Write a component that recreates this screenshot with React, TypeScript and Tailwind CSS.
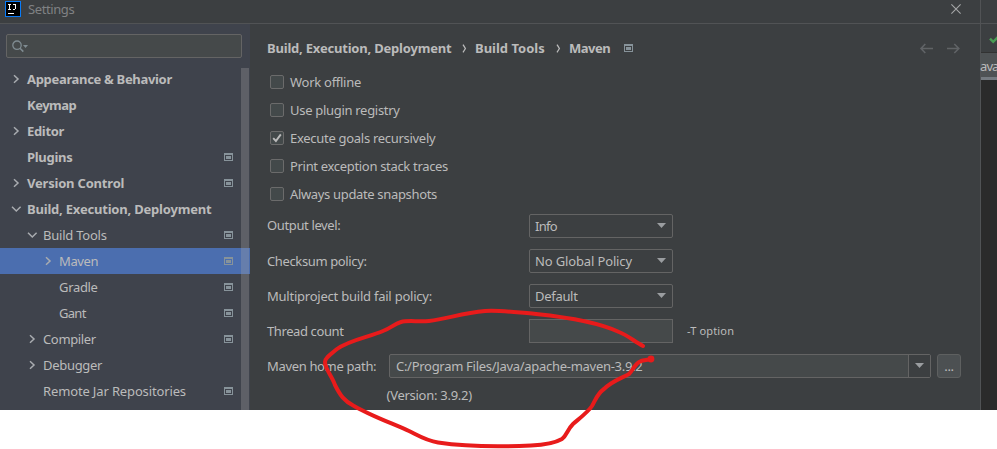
import type { ReactNode } from "react";

type Arrow = "right" | "down" | null;

function Chevron({ dir }: { dir: Arrow }) {
  if (!dir) return null;
  return (
    <svg className="block" width="12" height="12" viewBox="0 0 12 12" fill="none" stroke="#a9acb0" strokeWidth="1.5">
      {dir === "right" ? <path d="M4 2.3 L8 6 L4 9.7" /> : <path d="M2 3.8 L6.3 8 L10.6 3.8" />}
    </svg>
  );
}

function ProjectIcon() {
  return (
    <svg className="block shrink-0" width="9" height="8" viewBox="0 0 9 8" shapeRendering="crispEdges">
      <path fill="#87939a" fillRule="evenodd" d="M0 0h9v8H0z M1 2v5h7V2z" />
      <path fill="#87939a" d="M2 3h5v3H2z" />
    </svg>
  );
}

function Row({
  label,
  pad,
  arrow = null,
  bold,
  icon,
  selected,
  track = "",
}: {
  label: string;
  pad: string;
  arrow?: Arrow;
  bold?: boolean;
  icon?: boolean;
  selected?: boolean;
  track?: string;
}) {
  return (
    <div className={`flex h-[26px] items-center pr-[17px] ${pad} ${selected ? "bg-[#4b6eaf]" : ""}`}>
      <span className="mr-[5px] size-3 shrink-0">
        <Chevron dir={arrow} />
      </span>
      <span className={`flex-1 ${bold ? "font-bold" : ""} ${track}`}>{label}</span>
      {icon && <ProjectIcon />}
    </div>
  );
}

function Check({ label, checked, track = "" }: { label: string; checked?: boolean; track?: string }) {
  return (
    <div className="flex h-7 items-center">
      <span className="mr-[6px] flex size-[14px] items-center justify-center rounded-[2px] border border-[#6b6b6b] bg-[#43494a]">
        {checked && (
          <svg width="10" height="10" viewBox="0 0 10 10" fill="none" stroke="#bbbbbb" strokeWidth="1.9">
            <path d="M1.2 5.2 L3.9 8 L8.8 1.4" />
          </svg>
        )}
      </span>
      <span className={track}>{label}</span>
    </div>
  );
}

function Triangle() {
  return (
    <svg width="9" height="5" viewBox="0 0 9 5">
      <path d="M0 0h9L4.5 5z" fill="#9a9da0" />
    </svg>
  );
}

function Field({ label, children, track = "" }: { label: string; children: ReactNode; track?: string }) {
  return (
    <div className="flex h-[35px] items-center">
      <span className={`w-[262px] ${track}`}>{label}</span>
      {children}
    </div>
  );
}

function Select({ value, track = "" }: { value: string; track?: string }) {
  return (
    <div className="flex h-6 w-[144px] items-center justify-between rounded-[2px] border border-[#646464] pl-[5px] pr-[6px]">
      <span className={track}>{value}</span>
      <Triangle />
    </div>
  );
}

function Separator() {
  return (
    <svg width="5" height="9" viewBox="0 0 5 9" fill="none" stroke="#bbbbbb" strokeWidth="1.3">
      <path d="M1 .7 Q2.5 3 3.4 4.5 Q2.5 6 1 8.3" />
    </svg>
  );
}

export default function App() {
  return (
    <div className="relative h-[449px] w-[997px] overflow-hidden whitespace-nowrap bg-white font-['Noto_Sans','Open_Sans',sans-serif] text-[13px] leading-[18px] text-[#bbbbbb]">
      <div className="flex h-[410px]">
        <div className="flex w-[980px] flex-col bg-[#3c3f41]">
          <header className="flex h-[24px] items-center border-b border-[#515355] pb-[5px] pl-[5px] pr-[19px]">
            <svg className="block shrink-0" width="16" height="16" viewBox="0 0 16 16" shapeRendering="crispEdges">
              <path fill="#087cfa" d="M0 0h16v16H0z" />
              <path fill="#000" d="M1 1h14v14H1z" />
              <path fill="none" stroke="#fff" strokeWidth="1" d="M3 3.5h3M4.5 3v6M3 8.5h3M8 3.5h3M10.5 3v5M7.5 8.5h2.5" />
              <path fill="#fff" d="M3 12h6v1H3z" />
            </svg>
            <span className="ml-[7px] flex-1 tracking-[-0.4px] text-[#808284]">Settings</span>
            <svg width="10" height="10" viewBox="0 0 10 10" stroke="#a5a7a8" strokeWidth="1.1">
              <path d="M.4 .4 L9.6 9.6 M9.6 .4 L.4 9.6" />
            </svg>
          </header>

          <div className="flex flex-1">
            <aside className="relative h-[386px] w-[250px] bg-[#3f434c]">
              <div className="px-[6px] pt-[10px]">
                <div className="flex h-6 w-[236px] items-center rounded-[2px] border border-[#646464] bg-[#45494a] pl-[5px]">
                  <svg width="17" height="13" viewBox="0 0 17 13" fill="none">
                    <circle cx="5" cy="5.2" r="4.2" stroke="#7f8b91" strokeWidth="1.3" />
                    <path d="M8 8.2 L11.3 11.6" stroke="#7f8b91" strokeWidth="1.6" />
                    <path d="M11 5h5l-2.5 3z" fill="#7f8b91" />
                  </svg>
                </div>
              </div>
              <nav className="pt-[8px]">
                <Row label="Appearance & Behavior" pad="pl-[10px]" arrow="right" bold track="tracking-[-0.32px]" />
                <Row label="Keymap" pad="pl-[10px]" bold track="tracking-[-0.5px]" />
                <Row label="Editor" pad="pl-[10px]" arrow="right" bold track="tracking-[-0.33px]" />
                <Row label="Plugins" pad="pl-[10px]" bold icon track="tracking-[-0.3px]" />
                <Row label="Version Control" pad="pl-[10px]" arrow="right" bold icon track="tracking-[-0.2px]" />
                <Row label="Build, Execution, Deployment" pad="pl-[10px]" arrow="down" bold track="tracking-[-0.2px]" />
                <Row label="Build Tools" pad="pl-[26px]" arrow="down" icon track="tracking-[-0.23px]" />
                <Row label="Maven" pad="pl-[42px]" arrow="right" icon selected track="tracking-[-0.4px]" />
                <Row label="Gradle" pad="pl-[42px]" icon track="tracking-[-0.33px]" />
                <Row label="Gant" pad="pl-[42px]" icon track="tracking-[-0.7px]" />
                <Row label="Compiler" pad="pl-[26px]" arrow="right" icon track="tracking-[-0.35px]" />
                <Row label="Debugger" pad="pl-[26px]" arrow="right" track="tracking-[-0.3px]" />
                <Row label="Remote Jar Repositories" pad="pl-[26px]" icon track="tracking-[-0.14px]" />
              </nav>
              <div className="absolute bottom-0 right-[1px] top-[44px] w-2 bg-[#a6a6a6]/30" />
            </aside>

            <main className="flex-1 pl-[17px] pt-[14px]">
              <div className="flex h-5 items-center pr-5 font-bold">
                <span className="w-[184px] tracking-[-0.2px]">Build, Execution, Deployment</span>
                <span className="flex w-6 pl-[11px]"><Separator /></span>
                <span className="w-[70px]">Build Tools</span>
                <span className="flex w-6 pl-[11px]"><Separator /></span>
                <span className="w-[55px] tracking-[-0.5px]">Maven</span>
                <ProjectIcon />
                <svg className="ml-auto" width="41" height="11" viewBox="0 0 41 11" fill="none" stroke="#606366" strokeWidth="1.6">
                  <path d="M6.3 1 L2 5.5 L6.3 10 M2 5.5H14 M35.3 1 L39.8 5.5 L35.3 10 M39.8 5.5H28" />
                </svg>
              </div>
              <div className="pl-[3px] pt-[10px]">
                <Check label="Work offline" track="tracking-[-0.27px]" />
                <Check label="Use plugin registry" track="tracking-[-0.3px]" />
                <Check label="Execute goals recursively" checked track="tracking-[-0.29px]" />
                <Check label="Print exception stack traces" track="tracking-[-0.32px]" />
                <Check label="Always update snapshots" track="tracking-[-0.34px]" />
              </div>
              <Field label="Output level:" track="pb-[2px] tracking-[-0.37px]"><Select value="Info" track="tracking-[-0.7px]" /></Field>
              <Field label="Checksum policy:" track="tracking-[-0.37px]"><Select value="No Global Policy" track="tracking-[-0.14px]" /></Field>
              <Field label="Multiproject build fail policy:" track="tracking-[-0.23px]"><Select value="Default" track="tracking-[-0.3px]" /></Field>
              <Field label="Thread count" track="tracking-[-0.4px]">
                <div className="h-6 w-[144px] border border-[#646464] bg-[#45494a]" />
                <span className="ml-[14px] text-[11px] tracking-[0.15px]">-T option</span>
              </Field>
              <div className="flex h-[35px] items-center">
                <span className="w-[122px] tracking-[-0.34px]">Maven home path:</span>
                <div className="flex h-6 w-[542px] items-stretch rounded-[2px] border border-[#646464] bg-[#45494a]">
                  <span className="flex flex-1 items-center pl-[6px] tracking-[-0.29px]">C:/Program Files/Java/apache-maven-3.9.2</span>
                  <span className="flex w-[22px] items-center justify-center border-l border-[#646464] bg-[#3c3f41]"><Triangle /></span>
                </div>
                <span className="ml-[6px] flex h-6 w-6 items-center justify-center rounded-[3px] border border-[#5e6060] bg-[#4c5052] tracking-[-0.4px]">...</span>
              </div>
              <div className="pl-[119.5px] pt-[3px] tracking-[-0.27px]">(Version: 3.9.2)</div>
            </main>
          </div>
        </div>

        <div className="w-[17px] border-l border-[#515355] bg-[#2b2b2b]">
          <div className="h-6 border-b border-[#515355] bg-[#3c3f41]" />
          <div className="h-[29px] overflow-hidden border-b border-[#323232] bg-[#3c3f41] pl-[8px] pt-[11px]">
            <svg width="11" height="9" viewBox="0 0 11 9" fill="none" stroke="#499c54" strokeWidth="2.4">
              <path d="M1 3.6 L4.2 6.8 L10 1" />
            </svg>
          </div>
          <div className="flex h-[27px] items-center border-b-[3px] border-[#747a80] bg-[#4e5254] pt-[2px]">
            <span className="-ml-[1px] tracking-[-0.9px]">ava</span>
          </div>
        </div>
      </div>

      <svg className="pointer-events-none absolute inset-0" width="997" height="449" viewBox="0 0 997 449" fill="none" stroke="#e81b1b" strokeWidth="4" strokeLinecap="round" strokeLinejoin="round">
        <path d="M643 346 C634 341 627 335 619 332 C600 323 565 317 536 314 C515 312 499 310 485 311 C462 313 447 319 429 321 C418 322 408 320 401 322 C394 324 391 328 383 331 C369 337 349 340 337 349 C331 354 325 358 325 362 C325 369 332 376 335 385 C340 395 344 401 354 406 C371 416 394 424 409 431 C419 436 427 441 438 442.5 C465 446.5 498 447 531 445.5 C543 445 555 443 562 439 C567 435 567 430 573 424 C580 418 588 412 592 406 C596 399 597 394 604 389 C612 381 622 378 629 374 C634 369 634 364 641 361 C644 360 648 360 651 359" />
        <circle cx="651" cy="359" r="1.4" />
      </svg>
    </div>
  );
}
